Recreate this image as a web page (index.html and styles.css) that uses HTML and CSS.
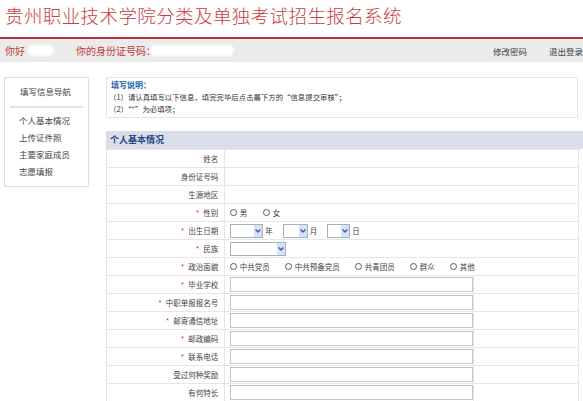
FILE: index.html
```html
<!DOCTYPE html>
<html lang="zh-CN">
<head>
<meta charset="utf-8">
<title>贵州职业技术学院分类及单独考试招生报名系统</title>
<link rel="stylesheet" href="styles.css">
</head>
<body>
<div class="title">贵州职业技术学院分类及单独考试招生报名系统</div>
<div class="topbar">
  <span class="hello">你好</span><span class="blob blob-name"></span>
  <span class="idlabel">你的身份证号码：</span><span class="blob blob-id"></span>
  <span class="spacer"></span>
  <a class="toplink">修改密码</a>
  <a class="toplink last">退出登录</a>
</div>
<div class="main">
  <aside class="nav">
    <div class="nav-title">填写信息导航</div>
    <div class="nav-sep"></div>
    <ul class="nav-list">
      <li>个人基本情况</li>
      <li>上传证件照</li>
      <li>主要家庭成员</li>
      <li>志愿填报</li>
    </ul>
  </aside>
  <div class="content">
    <div class="notice">
      <div class="notice-title">填写说明：</div>
      <div class="notice-line">（1）请认真填写以下信息，填完完毕后点击最下方的“信息提交审核”；</div>
      <div class="notice-line">（2）“<span class="req-inline">*</span>”为必填项；</div>
    </div>
    <div class="section-head">个人基本情况</div>
    <table class="form">
      <tr><td class="lbl">姓名</td><td class="val" colspan="2"></td></tr>
      <tr><td class="lbl">身份证号码</td><td class="val" colspan="2"></td></tr>
      <tr><td class="lbl">生源地区</td><td class="val" colspan="2"></td></tr>
      <tr><td class="lbl"><span class="req">*</span>性别</td>
        <td class="val" colspan="2">
          <span class="radio"><span class="circle"></span>男</span><span class="radio"><span class="circle"></span>女</span>
        </td></tr>
      <tr><td class="lbl"><span class="req">*</span>出生日期</td>
        <td class="val" colspan="2">
          <span class="sel sel-year"><span class="sel-box"></span><span class="sel-arrow"><svg width="6" height="4" viewBox="0 0 6 4"><path d="M0.6 0.6 L3 3 L5.4 0.6" fill="none" stroke="#2d5cae" stroke-width="1.4"/></svg></span></span><span class="unit">年</span><span class="sel sel-month"><span class="sel-box"></span><span class="sel-arrow"><svg width="6" height="4" viewBox="0 0 6 4"><path d="M0.6 0.6 L3 3 L5.4 0.6" fill="none" stroke="#2d5cae" stroke-width="1.4"/></svg></span></span><span class="unit">月</span><span class="sel sel-day"><span class="sel-box"></span><span class="sel-arrow"><svg width="6" height="4" viewBox="0 0 6 4"><path d="M0.6 0.6 L3 3 L5.4 0.6" fill="none" stroke="#2d5cae" stroke-width="1.4"/></svg></span></span><span class="unit">日</span>
        </td></tr>
      <tr><td class="lbl"><span class="req">*</span>民族</td>
        <td class="val" colspan="2">
          <span class="sel sel-nation"><span class="sel-box"></span><span class="sel-arrow"><svg width="6" height="4" viewBox="0 0 6 4"><path d="M0.6 0.6 L3 3 L5.4 0.6" fill="none" stroke="#2d5cae" stroke-width="1.4"/></svg></span></span>
        </td></tr>
      <tr><td class="lbl"><span class="req">*</span>政治面貌</td>
        <td class="val" colspan="2">
          <span class="radio wide"><span class="circle"></span>中共党员</span><span class="radio wide"><span class="circle"></span>中共预备党员</span><span class="radio wide"><span class="circle"></span>共青团员</span><span class="radio wide"><span class="circle"></span>群众</span><span class="radio wide"><span class="circle"></span>其他</span>
        </td></tr>
      <tr><td class="lbl"><span class="req">*</span>毕业学校</td><td class="val"><span class="txt"></span></td><td class="extra"></td></tr>
      <tr><td class="lbl"><span class="req">*</span>中职单报报名号</td><td class="val"><span class="txt"></span></td><td class="extra"></td></tr>
      <tr><td class="lbl"><span class="req">*</span>邮寄通信地址</td><td class="val"><span class="txt"></span></td><td class="extra"></td></tr>
      <tr><td class="lbl"><span class="req">*</span>邮政编码</td><td class="val"><span class="txt"></span></td><td class="extra"></td></tr>
      <tr><td class="lbl"><span class="req">*</span>联系电话</td><td class="val"><span class="txt"></span></td><td class="extra"></td></tr>
      <tr><td class="lbl">受过何种奖励</td><td class="val"><span class="txt"></span></td><td class="extra"></td></tr>
      <tr><td class="lbl">有何特长</td><td class="val"><span class="txt"></span></td><td class="extra"></td></tr>
    </table>
  </div>
</div>
</body>
</html>
```

FILE: styles.css
```css
* { box-sizing: border-box; }
html, body {
  margin: 0;
  padding: 0;
  background: #fff;
  font-family: "Noto Sans CJK SC", "Liberation Sans", sans-serif;
  color: #444;
  overflow: hidden;
}
.title {
  height: 37px;
  line-height: 31px;
  padding-left: 5px;
  font-size: 18.5px;
  font-weight: 300;
  color: #c83c46;
  letter-spacing: 0.4px;
  white-space: nowrap;
}
.topbar {
  height: 25px;
  border-top: 2px solid #b8323a;
  background: #ebebeb;
  display: flex;
  align-items: center;
  padding: 0 0 0 5px;
  font-size: 10px;
  white-space: nowrap;
}
.hello, .idlabel { color: #c23a3a; }
.blob {
  display: inline-block;
  height: 11px;
  background: #fff;
  border-radius: 6px;
  filter: blur(1px);
}
.blob-name { width: 26px; margin: 0 22px 0 3px; }
.blob-id { width: 84px; margin-left: -6px; }
.spacer { flex: 1; }
.toplink { color: #444; text-decoration: none; font-size: 8.5px; }
.toplink.last { margin-left: 22px; }

.main {
  display: flex;
  align-items: flex-start;
  padding-top: 15px;
}
.nav {
  margin-left: 4px;
  width: 85px;
  height: 110px;
  border: 1px solid #dedede;
  box-shadow: 0 0 1px #eee;
  font-size: 8.5px;
  color: #444;
}
.nav-title {
  height: 28px;
  line-height: 27px;
  padding-left: 15px;
}
.nav-sep {
  height: 2px;
  margin: 0 5px;
  background: #e2e2e2;
}
.nav-list {
  list-style: none;
  margin: 0;
  padding: 4px 0 0 14px;
}
.nav-list li {
  line-height: 17px;
  height: 17px;
}

.content {
  margin-left: 17px;
  width: 477px;
  flex: none;
}
.notice {
  width: 472px;
  height: 41px;
  border: 1px solid #e4e4e4;
  padding: 1px 0 0 2px;
  font-size: 7.4px;
  color: #333;
}
.notice-title {
  font-size: 8px;
  font-weight: bold;
  color: #1f5fae;
  line-height: 12px;
  padding-left: 2px;
}
.notice-line {
  line-height: 12px;
  white-space: nowrap;
}
.req-inline { color: #e02020; }
.section-head {
  margin-top: 13px;
  height: 18px;
  line-height: 18px;
  background: #d9dee9;
  font-size: 9px;
  font-weight: bold;
  color: #1d4584;
  padding-left: 4px;
}
.form {
  width: 473px;
  border-collapse: collapse;
  font-size: 7.5px;
  color: #444;
}
.form td {
  height: 18px;
  padding: 0;
  border: 1px solid #e6e6e6;
  vertical-align: middle;
  white-space: nowrap;
}
.form .lbl {
  width: 119px;
  text-align: right;
  padding-right: 6px;
}
.form .val {
  padding-left: 5px;
  width: 248px;
}
.form .extra { width: 106px; }
.req {
  color: #e02020;
  margin-right: 4px;
}
.radio {
  display: inline-flex;
  align-items: center;
  margin-right: 16px;
}
.radio.wide { margin-right: 15.5px; }
.circle {
  display: inline-block;
  width: 7px;
  height: 7px;
  border: 1px solid #5a5a5a;
  border-radius: 50%;
  background: #fff;
  margin-right: 2.5px;
}
.sel {
  display: inline-flex;
  vertical-align: middle;
  height: 14px;
  border: 1px solid #a9b0ba;
  background: #fff;
}
.sel-box { flex: 1; }
.sel-arrow {
  width: 8px;
  display: flex;
  align-items: center;
  justify-content: center;
  background: #d6e2f5;
}
.sel-year { width: 33px; }
.sel-month { width: 25px; }
.sel-day { width: 23px; }
.sel-nation { width: 56px; }
.unit {
  vertical-align: middle;
  margin: 0 10px 0 2px;
}
.txt {
  display: block;
  width: 243px;
  height: 15px;
  border: 1px solid #c6c6c6;
  border-top-color: #bdbdbd;
  background: #fff;
}
```
